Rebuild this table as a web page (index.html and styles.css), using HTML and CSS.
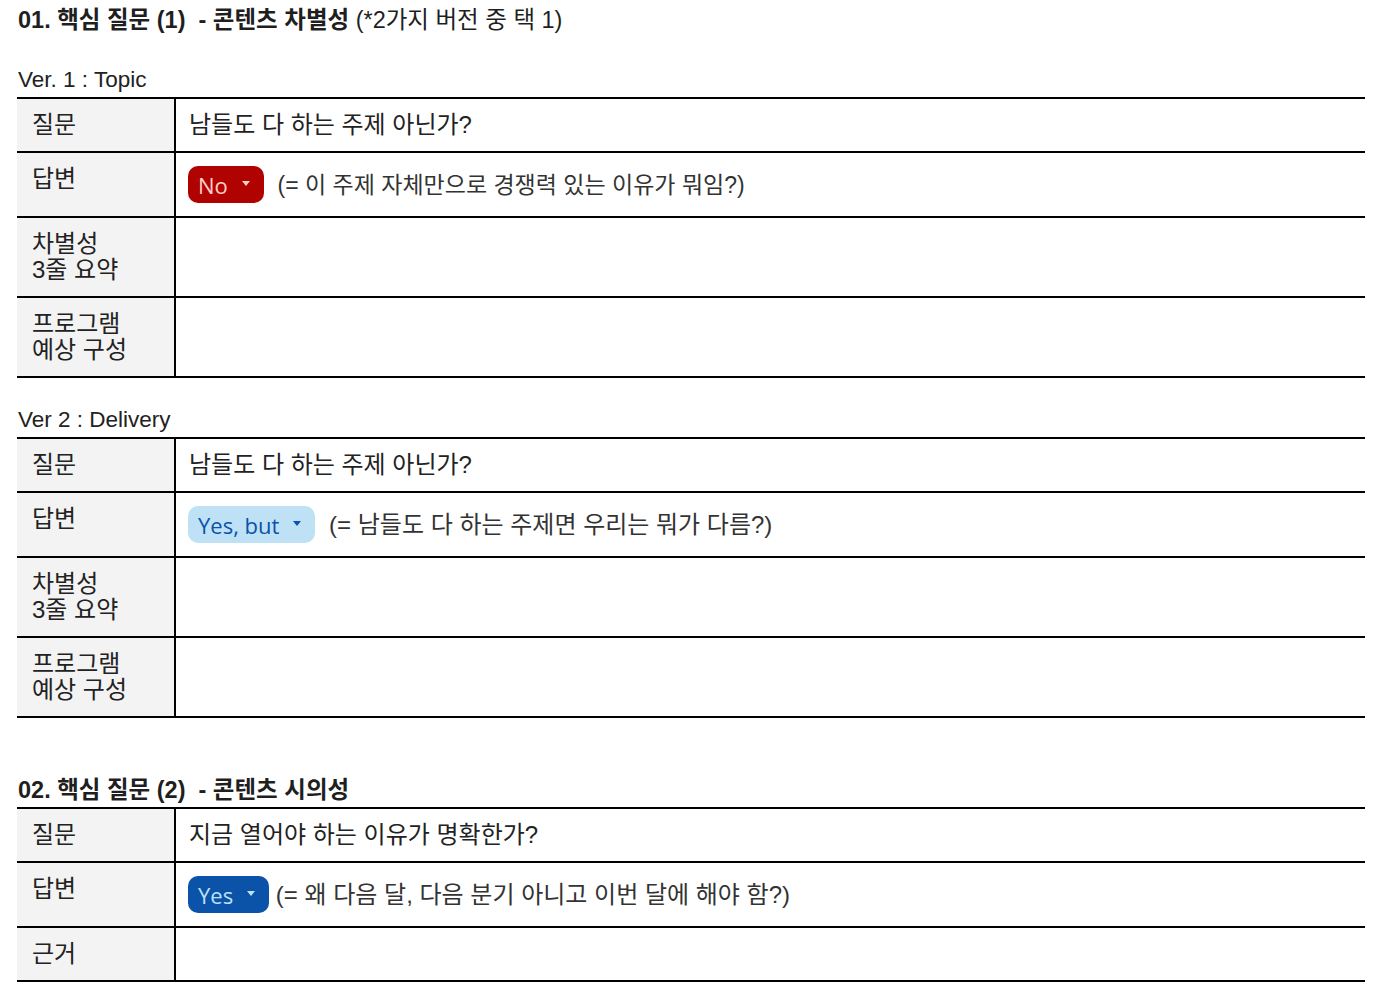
FILE: index.html
```html
<!DOCTYPE html>
<html lang="ko">
<head>
<meta charset="utf-8">
<link rel="stylesheet" href="styles.css">
</head>
<body>
<div class="page">
  <h1 class="title"><b>01. 핵심 질문 (1)&nbsp; - 콘텐츠 차별성</b> (*2가지 버전 중 택 1)</h1>

  <div class="label first">Ver. 1 : Topic</div>
  <div class="table">
    <div class="row"><div class="key">질문</div><div class="val">남들도 다 하는 주제 아닌가?</div></div>
    <div class="row"><div class="key">답변</div><div class="val"><span class="chip red">No <i class="caret"></i></span><span class="note small">(= 이 주제 자체만으로 경쟁력 있는 이유가 뭐임?)</span></div></div>
    <div class="row tall"><div class="key">차별성<br>3줄 요약</div><div class="val"></div></div>
    <div class="row tall"><div class="key">프로그램<br>예상 구성</div><div class="val"></div></div>
  </div>

  <div class="label second">Ver 2 : Delivery</div>
  <div class="table">
    <div class="row"><div class="key">질문</div><div class="val">남들도 다 하는 주제 아닌가?</div></div>
    <div class="row"><div class="key">답변</div><div class="val"><span class="chip light">Yes, but <i class="caret"></i></span><span class="note">(= 남들도 다 하는 주제면 우리는 뭐가 다름?)</span></div></div>
    <div class="row tall"><div class="key">차별성<br>3줄 요약</div><div class="val"></div></div>
    <div class="row tall"><div class="key">프로그램<br>예상 구성</div><div class="val"></div></div>
  </div>

  <h2 class="title section"><b>02. 핵심 질문 (2)&nbsp; - 콘텐츠 시의성</b></h2>
  <div class="table">
    <div class="row"><div class="key">질문</div><div class="val">지금 열어야 하는 이유가 명확한가?</div></div>
    <div class="row"><div class="key">답변</div><div class="val"><span class="chip dark">Yes <i class="caret"></i></span><span class="note tight">(= 왜 다음 달, 다음 분기 아니고 이번 달에 해야 함?)</span></div></div>
    <div class="row"><div class="key">근거</div><div class="val"></div></div>
  </div>
</div>
</body>
</html>
```

FILE: styles.css
```css
* { box-sizing: border-box; }
html, body { margin: 0; padding: 0; background: #fff; }
body {
  font-family: "Liberation Sans", "Noto Sans CJK KR", Arial, sans-serif;
  color: #1f1f1f;
}
.page {
  width: 1348px;
  margin-left: 17px;
}
.title {
  margin: 0;
  font-size: 23.5px;
  font-weight: normal;
  line-height: 40px;
  height: 40px;
  padding-left: 1px;
  white-space: nowrap;
}
.title b { font-weight: bold; }
.title.section {
  margin-top: 60px;
  line-height: 24px;
  height: 29px;
  padding-bottom: 5px;
}
.label {
  font-size: 22.5px;
  line-height: 24px;
  height: 29px;
  padding-bottom: 5px;
  padding-left: 1px;
  color: #222;
}
.label.first { margin-top: 28px; }
.label.second { margin-top: 30px; }
.table {
  border-bottom: 2px solid #000;
}
.row {
  display: flex;
  border-top: 2px solid #000;
}
.key {
  width: 159px;
  flex: none;
  background: #f3f3f3;
  border-right: 2px solid #000;
  padding: 13px 10px 13px 15px;
  font-size: 24px;
  line-height: 26px;
  color: #222;
  white-space: nowrap;
}
.val {
  flex: 1;
  padding: 13px 14px 13px 13px;
  font-size: 24px;
  line-height: 26px;
  color: #222;
  display: flex;
  align-items: center;
  min-height: 52px;
  white-space: nowrap;
}
.row.tall .key { min-height: 78px; }
.chip {
  display: inline-flex;
  align-items: center;
  height: 37px;
  border-radius: 10px;
  font-family: "Open Sans", "Liberation Sans", sans-serif;
  font-size: 22px;
  padding: 0 14px 0 10px;
  margin-left: -1px;
  margin-right: 14px;
  white-space: pre;
}
.chip.red { background: #b10202; color: #ffcfc9; }
.chip.light { background: #bfe1f6; color: #0a53a8; }
.chip.dark { background: #0a53a8; color: #bfe1f6; }
.caret {
  display: inline-block;
  width: 0; height: 0;
  border-left: 4px solid transparent;
  border-right: 4px solid transparent;
  border-top: 5px solid currentColor;
  margin-left: 8px;
  position: relative;
  top: -1px;
}
.note { color: #333; }
.note.small { font-size: 23px; }
.note.tight { margin-left: -7px; }
```
